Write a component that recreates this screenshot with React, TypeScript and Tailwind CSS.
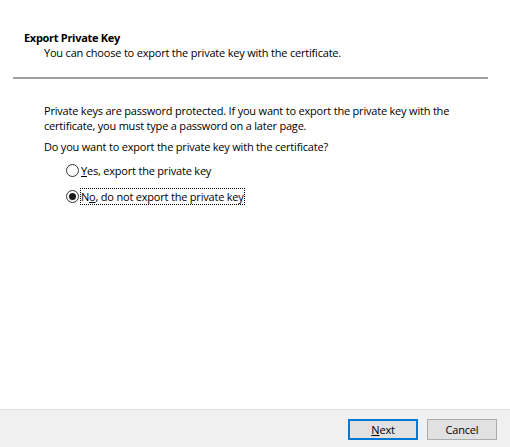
import React from "react";

function Radio({ checked }: { checked: boolean }) {
  return (
    <span className="w-[13px] h-[13px] rounded-full border border-[#333333] bg-white flex items-center justify-center shrink-0">
      {checked && <span className="w-[7px] h-[7px] rounded-full bg-[#1a1a1a]" />}
    </span>
  );
}

export default function App() {
  return (
    <div
      className="w-[510px] h-[447px] bg-white flex flex-col text-[11px] leading-[15px] tracking-[-0.2px] text-black"
      style={{ fontFamily: '"Open Sans", "Noto Sans", sans-serif' }}
    >
      <div className="flex-1 flex flex-col">
        <div className="pt-[30px] pl-[24px]">
          <div className="font-bold tracking-[-0.3px]">Export Private Key</div>
          <div className="pl-[20px]">You can choose to export the private key with the certificate.</div>
        </div>
        <div className="mt-[17px] ml-[13px] w-[475px] h-[2px] bg-[#a0a0a0]" />
        <div className="pl-[44px] pt-[24px] flex flex-col">
          <div className="whitespace-nowrap">
            Private keys are password protected. If you want to export the private key with the
            <br />
            certificate, you must type a password on a later page.
          </div>
          <div className="mt-[6px]">Do you want to export the private key with the certificate?</div>
          <div className="ml-[22px] mt-[8px] flex flex-col gap-[9px]">
            <div className="flex items-center gap-[1px]">
              <Radio checked={false} />
              <span className="border border-transparent">
                <span className="underline">Y</span>es, export the private key
              </span>
            </div>
            <div className="flex items-center gap-[1px]">
              <Radio checked={true} />
              <span className="border border-dotted border-black">
                N<span className="underline">o</span>, do not export the private key
              </span>
            </div>
          </div>
        </div>
      </div>
      <div className="h-[38px] bg-[#f0f0f0] border-t border-[#dfdfdf] flex items-start justify-end pt-[9px] pr-[13px] gap-[9px]">
        <button className="w-[70px] h-[21px] bg-[#e1e1e1] border-2 border-[#0078d7] flex items-center justify-center">
          <span>
            <span className="underline">N</span>ext
          </span>
        </button>
        <button className="w-[70px] h-[21px] bg-[#e1e1e1] border border-[#adadad] flex items-center justify-center">
          Cancel
        </button>
      </div>
    </div>
  );
}
